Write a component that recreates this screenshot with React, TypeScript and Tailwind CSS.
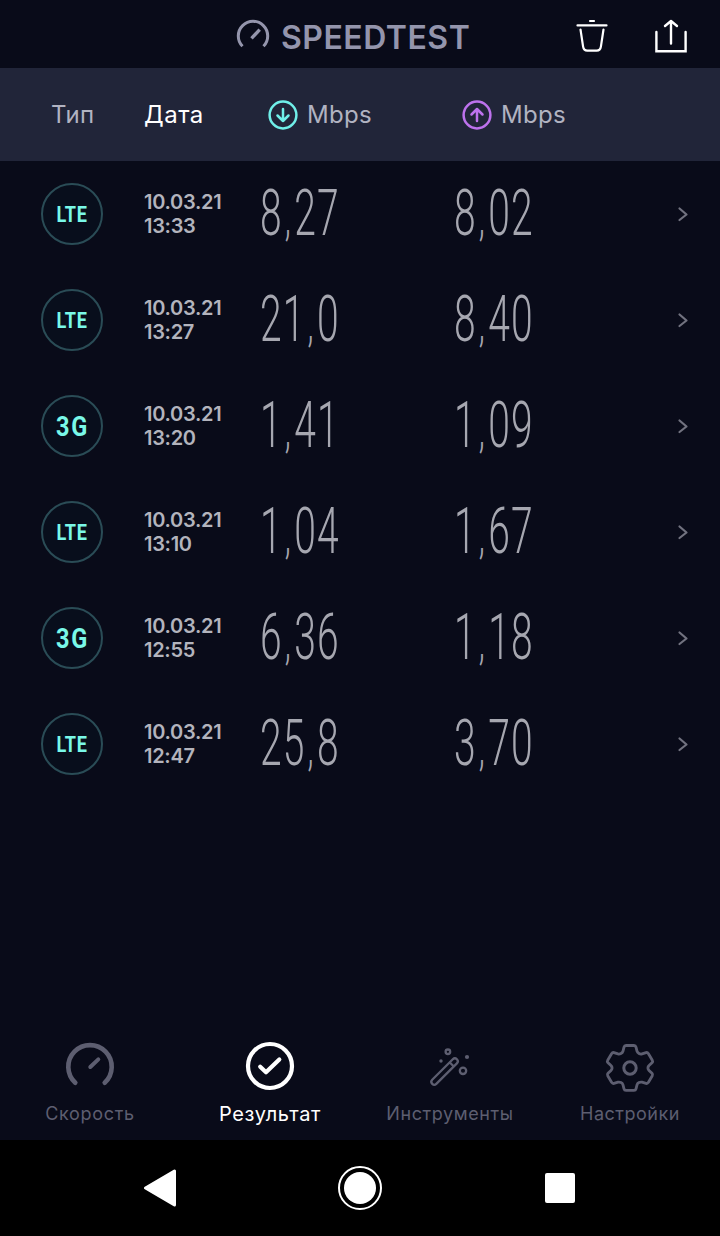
import React from 'react';

const results = [
  { type: 'LTE', date: '10.03.21', time: '13:33', download: '8,27', upload: '8,02' },
  { type: 'LTE', date: '10.03.21', time: '13:27', download: '21,0', upload: '8,40' },
  { type: '3G', date: '10.03.21', time: '13:20', download: '1,41', upload: '1,09' },
  { type: 'LTE', date: '10.03.21', time: '13:10', download: '1,04', upload: '1,67' },
  { type: '3G', date: '10.03.21', time: '12:55', download: '6,36', upload: '1,18' },
  { type: 'LTE', date: '10.03.21', time: '12:47', download: '25,8', upload: '3,70' },
];

const TrashIcon = () => (
  <svg width="34" height="36" viewBox="0 0 34 36" fill="none" stroke="currentColor" strokeWidth="2.2" strokeLinecap="round" strokeLinejoin="round">
    <path d="M15 3h4M2.5 7.400h29M5.500 11.500l2.600 17.200c.4 2.700 1.600 4 4.200 4h9.400c2.600 0 3.800-1.300 4.200-4l2.600-17.200" />
  </svg>
);

const ShareIcon = () => (
  <svg width="34" height="36" viewBox="0 0 34 36" fill="none" stroke="currentColor" strokeWidth="2.4" strokeLinecap="round">
    <path d="M2.400 14v19.200h29.200V14" />
    <path d="M17 25.500V3.500M11 8l6-5 6 5" strokeLinejoin="round" />
  </svg>
);

const ArrowCircle = ({ up = false }: { up?: boolean }) => (
  <svg
    width="30"
    height="30"
    viewBox="0 0 30 30"
    fill="none"
    stroke="currentColor"
    strokeWidth="2.5"
    strokeLinecap="round"
    strokeLinejoin="round"
    className={up ? 'rotate-180' : ''}
  >
    <circle cx="15" cy="15" r="13.4" />
    <path d="M15 9v12M9.500 15.500l5.500 5.500 5.500-5.500" />
  </svg>
);

const GaugeIcon = () => (
  <svg width="50" height="50" viewBox="0 0 50 50" fill="none" stroke="currentColor" strokeWidth="4.6" strokeLinecap="round">
    <path d="M10.300 41.800A21.700 21.700 0 1 1 39.700 41.800" />
    <path d="M25.300 26l8-7.600" strokeWidth="4" />
  </svg>
);

const CheckIcon = () => (
  <svg width="50" height="50" viewBox="0 0 50 50" fill="none" stroke="currentColor" strokeWidth="4.2" strokeLinecap="round" strokeLinejoin="round">
    <circle cx="25" cy="25" r="22" />
    <path d="M15.200 25.800l5.800 5.500 13.300-12.800" />
  </svg>
);

const WandIcon = () => (
  <svg width="50" height="50" viewBox="0 0 50 50" fill="none" stroke="currentColor" strokeWidth="2.3" strokeLinecap="round" className="translate-y-[1.5px]">
    <path d="M7.200 37.300L27.800 16.800a2.850 2.850 0 0 1 4.100 4.100L11.300 41.400a2.900 2.900 0 0 1-4.100-4.100zM24.800 20l4 4" />
    <circle cx="22.900" cy="9.300" r="2.3" />
    <circle cx="38" cy="28.300" r="3.2" />
    <circle cx="42" cy="14.500" r="2.1" fill="currentColor" stroke="none" />
    <circle cx="16" cy="18.500" r="1.7" fill="currentColor" stroke="none" />
  </svg>
);

const GearIcon = () => (
  <svg width="50" height="50" viewBox="0 0 50 50" fill="none" stroke="currentColor" strokeWidth="2.8" strokeLinejoin="round" className="translate-y-[2px]">
    <path d="M21 2.500h8q1.600 0 2 1.600l1 4q.4 1.500 2 2.400t3 .4l4-1.300q1.500-.4 2.300 1l4 6.600q.8 1.300-.3 2.500l-3 2.900q-1.100 1-1.100 2.400t1.100 2.400l3 2.900q1.100 1.200.3 2.500l-4 6.600q-.8 1.400-2.300 1l-4-1.200q-1.400-.4-3 .4t-2 2.300l-1 4q-.4 1.500-2 1.500h-8q-1.600 0-2-1.500l-1-4q-.4-1.500-2-2.300t-3-.4l-4 1.200q-1.500.4-2.300-1l-4-6.600q-.8-1.300.3-2.500l3-2.900q1.100-1 1.100-2.400t-1.100-2.400l-3-2.900q-1.100-1.200-.3-2.500l4-6.600q.8-1.400 2.300-1l4 1.300q1.400.4 3-.4t2-2.400l1-4q.4-1.600 2-1.600z" />
    <circle cx="25" cy="25" r="6.2" strokeWidth="3" />
  </svg>
);

const tabs = [
  { label: 'Скорость', icon: <GaugeIcon />, active: false, spacing: 'tracking-[0.7px]' },
  { label: 'Результат', icon: <CheckIcon />, active: true, spacing: 'tracking-[0.6px]' },
  { label: 'Инструменты', icon: <WandIcon />, active: false, spacing: 'tracking-[0.6px]' },
  { label: 'Настройки', icon: <GearIcon />, active: false, spacing: 'tracking-[0.5px]' },
];

const Speed = ({ value }: { value: string }) => {
  const [whole, fraction] = value.split(',');

  return (
    <span className="block w-[194px] origin-left scale-x-[0.6] whitespace-nowrap pb-[3px] font-['Roboto',sans-serif] text-[65px] font-light leading-[78px] tracking-[2px] text-[#a6a7b0]">
      {whole}
      <span className="ml-[3px] mr-[4px] text-[52px] leading-none">,</span>
      {fraction}
    </span>
  );
};

const App = () => {
  return (
    <div className="flex h-[1236px] w-[720px] flex-col overflow-hidden bg-[#090b19] font-['Inter','Noto_Sans',sans-serif]">
      {/* Top bar */}
      <header className="flex h-[68px] shrink-0 items-center pt-1 text-white">
        <div className="ml-[236px] flex w-[339px] items-center text-[#9495ac]">
          <svg width="34" height="34" viewBox="0 0 34 34" fill="none" stroke="currentColor" strokeWidth="3" className="shrink-0">
            <path d="M6.500 27.300A14.700 14.700 0 1 1 27.500 27.300" />
            <path d="M15.500 19.300l8.200-8.700" strokeWidth="3.4" />
          </svg>
          <h1 className="ml-[11px] pt-[3px] text-[32px] font-semibold leading-10 tracking-[0.5px]">SPEEDTEST</h1>
        </div>
        <button aria-label="Удалить"><TrashIcon /></button>
        <button aria-label="Поделиться" className="ml-[45px]"><ShareIcon /></button>
      </header>

      {/* Column titles */}
      <div className="flex h-[93px] shrink-0 items-center bg-[#212539] pl-[51px] text-2xl text-[#b1b3c1]">
        <span className="w-[93px] tracking-[0.3px]">Тип</span>
        <span className="w-[124px] tracking-[0.5px] text-white">Дата</span>
        <div className="flex w-[194px] items-center gap-[9px] tracking-[0.3px]">
          <span className="text-[#70efe9]"><ArrowCircle /></span>
          Mbps
        </div>
        <div className="flex items-center gap-[9px] tracking-[0.3px]">
          <span className="text-[#bd72ed]"><ArrowCircle up /></span>
          Mbps
        </div>
      </div>

      {/* Test history */}
      <ul className="flex-1">
        {results.map((result) => (
          <li key={result.time} className="flex h-[106px] items-center pl-[41px]">
            <div className="flex size-[62px] items-center justify-center rounded-full border-2 border-[#2a4c56] bg-[#080e1c] font-['Roboto',sans-serif] font-bold text-[#79f8e8]">
              {result.type === 'LTE' ? (
                <span className="scale-x-[0.82] text-[22px] tracking-[0.8px]">LTE</span>
              ) : (
                <span className="scale-x-[0.84] pl-[2px] pt-[2px] text-[28px] tracking-[2px]">3G</span>
              )}
            </div>
            <div className="ml-[41px] w-[116px] text-xl font-semibold leading-6 tracking-[-0.3px] text-[#b3b4bd]">
              <div>{result.date}</div>
              <div>{result.time}</div>
            </div>
            <Speed value={result.download} />
            <Speed value={result.upload} />
            <svg width="12" height="16" viewBox="0 0 12 16" fill="none" stroke="#71727f" strokeWidth="2.2" strokeLinecap="round" strokeLinejoin="round" className="ml-[29px]">
              <path d="M2.500 2.500l7 6-7 5.500" />
            </svg>
          </li>
        ))}
      </ul>

      {/* Tabs */}
      <nav className="grid h-[99px] shrink-0 grid-cols-4">
        {tabs.map((tab) => (
          <button
            key={tab.label}
            className={`flex flex-col items-center whitespace-nowrap ${tab.active ? 'text-xl text-white' : 'text-lg text-[#5d5e70]'}`}
          >
            {tab.icon}
            <span className={`mt-[9px] leading-7 ${tab.spacing}`}>{tab.label}</span>
          </button>
        ))}
      </nav>

      {/* System navigation */}
      <div className="flex h-24 shrink-0 items-center bg-black pl-[143px] text-white">
        <svg width="34" height="38" viewBox="0 0 34 38" fill="currentColor" stroke="currentColor" strokeWidth="3" strokeLinejoin="round">
          <path d="M2.500 19L31.500 2v34z" />
        </svg>
        <div className="ml-[161px] flex size-11 items-center justify-center rounded-full border-2 border-white">
          <div className="size-8 rounded-full bg-white" />
        </div>
        <div className="ml-[163px] size-[30px] rounded-[2px] bg-white" />
      </div>
    </div>
  );
};

export default App;
